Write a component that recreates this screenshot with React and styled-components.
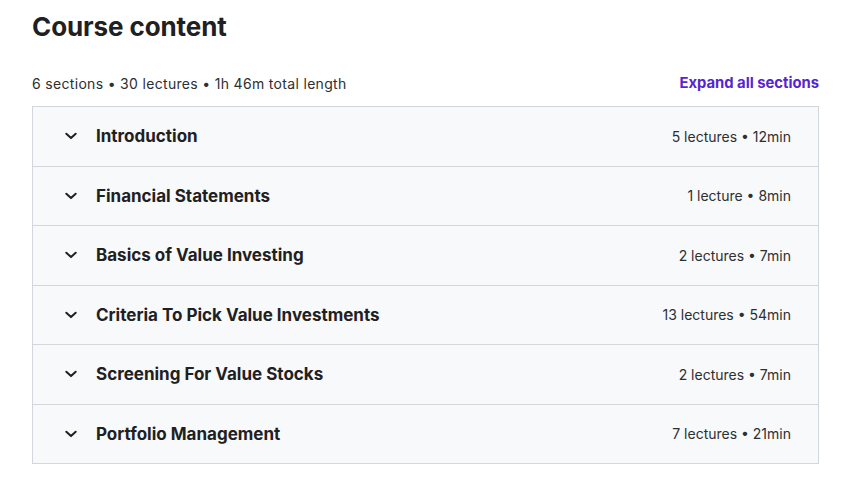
import React from 'react';
import styled, { createGlobalStyle } from 'styled-components';

const GlobalStyle = createGlobalStyle`
  body {
    margin: 0;
    background: #ffffff;
    font-family: 'Inter', 'Noto Sans', sans-serif;
    color: #2d2f31;
  }
`;

const Page = styled.div`
  padding: 8px 39px 0 32px;
`;

const Title = styled.h2`
  margin: 0;
  font-size: 26px;
  line-height: 38px;
  font-weight: 700;
  color: #1f2022;
  letter-spacing: -0.1px;
`;

const SummaryBar = styled.div`
  display: flex;
  justify-content: space-between;
  align-items: center;
  margin-top: 28px;
  height: 18px;
  margin-bottom: 14px;
  font-size: 14px;
`;

const Stats = styled.span`
  color: #2d2f31;
  letter-spacing: 0.32px;
`;

const ExpandLink = styled.button`
  border: 0;
  background: none;
  padding: 0;
  font: inherit;
  font-size: 14.8px;
  font-weight: 700;
  color: #5624d0;
  cursor: pointer;
`;

const Sections = styled.div`
  border: 1px solid #d1d7dc;
  border-bottom: 0;
`;

const SectionRow = styled.div`
  display: flex;
  align-items: center;
  height: 58.5px;
  padding: 0 27px 0 30px;
  background: #f7f9fa;
  border-bottom: 1px solid #d1d7dc;
`;

const Chevron = styled.svg`
  width: 16px;
  height: 16px;
  flex: none;
  margin-right: 17px;
`;

const SectionTitle = styled.span`
  flex: 1;
  font-size: 17px;
  font-weight: 700;
  color: #1f2022;
`;

const SectionMeta = styled.span`
  font-size: 14px;
  color: #2d2f31;
`;

const sections = [
  { title: 'Introduction', meta: '5 lectures • 12min' },
  { title: 'Financial Statements', meta: '1 lecture • 8min' },
  { title: 'Basics of Value Investing', meta: '2 lectures • 7min' },
  { title: 'Criteria To Pick Value Investments', meta: '13 lectures • 54min' },
  { title: 'Screening For Value Stocks', meta: '2 lectures • 7min' },
  { title: 'Portfolio Management', meta: '7 lectures • 21min' },
];

const ChevronDown = () => (
  <Chevron viewBox="0 0 16 16" fill="none">
    <path d="M3.3 5.7l4.7 4.4 4.7-4.4" stroke="#1f2022" strokeWidth="2" strokeLinecap="round" strokeLinejoin="round" />
  </Chevron>
);

const App = () => {
  return (
    <Page>
      <GlobalStyle />
      <Title>Course content</Title>
      <SummaryBar>
        <Stats>6 sections • 30 lectures • 1h 46m total length</Stats>
        <ExpandLink>Expand all sections</ExpandLink>
      </SummaryBar>
      <Sections>
        {sections.map((s) => (
          <SectionRow key={s.title}>
            <ChevronDown />
            <SectionTitle>{s.title}</SectionTitle>
            <SectionMeta>{s.meta}</SectionMeta>
          </SectionRow>
        ))}
      </Sections>
    </Page>
  );
};

export default App;
